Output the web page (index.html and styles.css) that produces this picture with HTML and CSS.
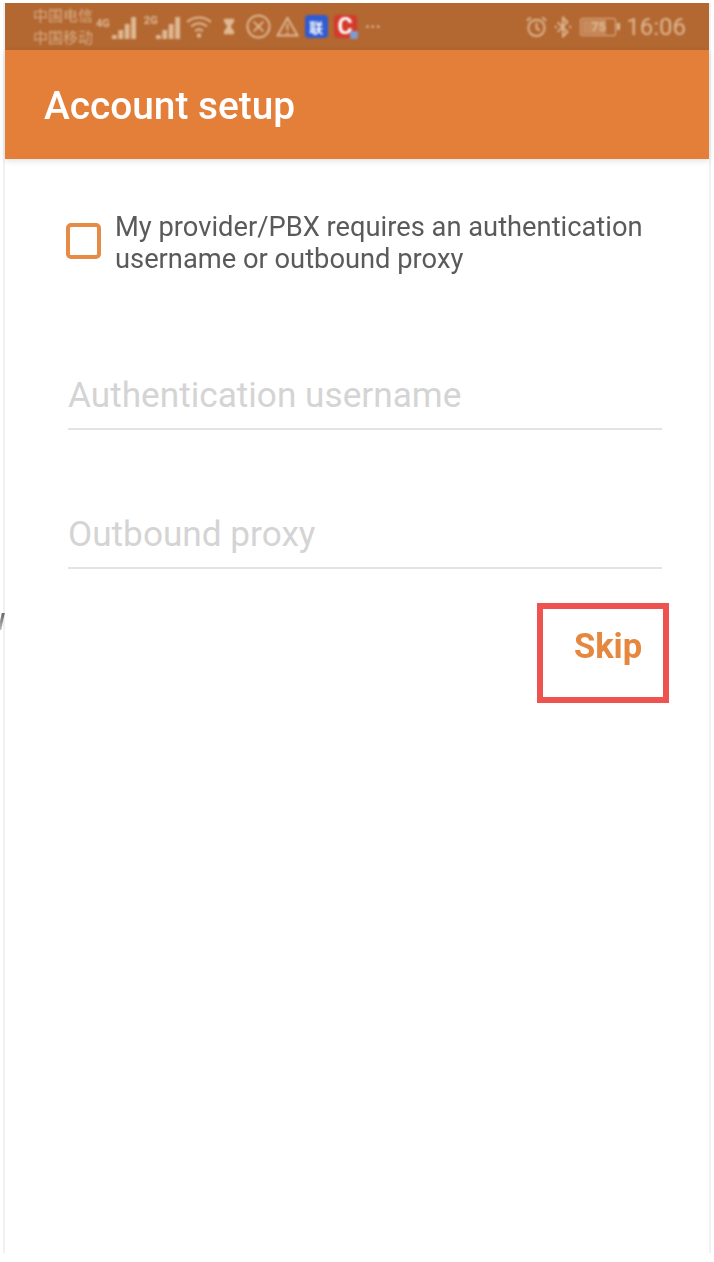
FILE: index.html
```html
<!DOCTYPE html>
<html lang="en">
<head>
<meta charset="utf-8">
<title>Account setup</title>
<link rel="stylesheet" href="styles.css">
</head>
<body>
<span class="stray"></span>
<main class="screen">
  <header class="status">
    <div class="status-left">
      <div class="carriers"><span>中国电信</span><span>中国移动</span></div>
      <span class="net net-a">4G</span>
      <svg class="ico sig sig-a" viewBox="0 0 20 22" preserveAspectRatio="none"><path d="M0 22h4v-4H0zM5.300 22h4v-9h-4zM10.600 22h4V7h-4zM16 22h4V0h-4z"/></svg>
      <span class="net net-b">2G</span>
      <svg class="ico sig sig-b" viewBox="0 0 20 22" preserveAspectRatio="none"><path d="M0 22h4v-4H0zM5.300 22h4v-9h-4zM10.600 22h4V7h-4zM16 22h4V0h-4z"/></svg>
      <svg class="ico wifi" viewBox="0 0 26 24"><path class="ln" d="M1 7c7-6 17-6 24 0M5 11.500c5-4 11-4 16 0M9 16c2.500-2 5.500-2 8 0"/><circle cx="13" cy="20.500" r="2.200"/></svg>
      <svg class="ico glass" viewBox="0 0 14 20"><path d="M1 1h12v3l-4 6 4 6v3H1v-3l4-6-4-6z"/></svg>
      <svg class="ico circ" viewBox="0 0 26 26"><circle class="ln" cx="13" cy="13" r="11.500"/><path class="ln" d="M8 8l10 10M18 8L8 18"/></svg>
      <svg class="ico warn" viewBox="0 0 24 22"><path class="ln" d="M12 2l10.500 18.500h-21z"/><path class="ln" d="M12 8v7M12 17v2"/></svg>
      <span class="app app-blue">联</span>
      <span class="app app-red">C</span>
      <span class="dots">···</span>
    </div>
    <div class="status-right">
      <svg class="ico alarm" viewBox="0 0 24 24"><circle class="ln" cx="12" cy="13.500" r="8.500"/><path class="ln" d="M12 8v6l3.500 2M2 6l4-3.500M22 6l-4-3.500"/></svg>
      <svg class="ico bt" viewBox="0 0 20 24"><path class="ln" d="M4 6.500l11 11-5 5V1.500l5 5-11 11"/><circle cx="2" cy="12" r="1.300"/><circle cx="18" cy="12" r="1.300"/></svg>
      <span class="battery"><span class="battery-fill">75</span></span>
      <span class="clock">16:06</span>
    </div>
  </header>
  <div class="appbar"><h1>Account setup</h1></div>
  <section class="content">
    <label class="check-row">
      <span class="box"></span>
      <span class="check-text">My provider/PBX requires an authentication username or outbound proxy</span>
    </label>
    <div class="field field-first">Authentication username</div>
    <div class="field field-second">Outbound proxy</div>
    <div class="actions"><div class="skip"><span class="skip-label">Skip</span></div></div>
  </section>
</main>
</body>
</html>
```
FILE: styles.css
```css
* { box-sizing: border-box; }
html, body { margin: 0; height: 100%; background: #fff; }
body { position: relative; height: 1262px; overflow: hidden; padding: 3px 3px 9px 3px; font-family: Roboto, "Noto Sans", sans-serif; }
.stray { position: absolute; left: 0; top: 613px; width: 3px; height: 17px; background: linear-gradient(#666, #bbb); transform: skewX(-12deg); }
.screen { width: 708px; height: 1250px; border-left: 2px solid #f1f1f1; border-right: 2px solid #f1f1f1; display: flex; flex-direction: column; }
.status { height: 47px; background: #b36731; color: #dfb994; display: flex; justify-content: space-between; align-items: center; padding: 0 23px 0 28px; }
.status-left, .status-right { display: flex; align-items: center; filter: blur(.8px); }
.carriers { display: flex; flex-direction: column; font: 15px/22px "Noto Sans CJK SC", sans-serif; color: #d9ae86; white-space: nowrap; margin-top: -2px; }
.ico { display: block; fill: currentColor; }
.ln { fill: none; stroke: currentColor; stroke-width: 2; }
.net { font-size: 11px; font-weight: 700; align-self: flex-start; margin-top: 11px; }
.net-a { margin-left: 3px; }
.net-b { margin-left: 8px; margin-top: 8px; }
.sig { width: 24px; height: 22px; margin-top: 3px; }
.sig-a { margin-left: 2px; }
.sig-b { margin-left: -2px; }
.wifi { width: 26px; height: 24px; margin-left: 6px; }
.glass { width: 12px; height: 17px; margin-left: 11px; }
.circ { width: 25px; height: 25px; margin-left: 11px; }
.warn { width: 23px; height: 21px; margin-left: 5px; }
.app { width: 23px; height: 23px; border-radius: 4px; margin-left: 6px; display: flex; align-items: center; justify-content: center; color: #fff; font-weight: 700; }
.app-blue { background: #2f5bd3; font: 700 14px/1 "Noto Sans CJK SC", sans-serif; }
.app-red { background: #d43a2c; font-size: 23px; position: relative; }
.app-red::after { content: ""; position: absolute; right: -1px; bottom: -1px; width: 8px; height: 8px; border-radius: 2px; background: #7f9ccf; }
.dots { margin-left: 8px; font-size: 18px; font-weight: 700; }
.alarm { width: 23px; height: 23px; }
.bt { width: 18px; height: 22px; margin-left: 6px; }
.battery { width: 36px; height: 18px; margin-left: 8px; border: 1.500px solid currentColor; border-radius: 2px; padding: 1px; position: relative; }
.battery::after { content: ""; position: absolute; right: -5px; top: 4px; width: 3px; height: 7px; background: currentColor; }
.battery-fill { display: block; height: 100%; width: 75%; background: rgba(223,185,148,.45); font-size: 13px; font-weight: 700; line-height: 13px; text-align: right; }
.clock { margin-left: 10px; font-size: 24px; line-height: 1; }
.appbar { height: 109px; background: #e47f3a; display: flex; align-items: center; padding: 4px 0 0 39px; box-shadow: 0 2px 6px rgba(0,0,0,.12); position: relative; }
.appbar h1 { margin: 0; color: #fff; font-size: 38.800px; font-weight: 500; line-height: 1; filter: blur(.6px); }
.content { padding: 52px 47px 0 61px; }
.check-row { display: flex; gap: 14px; align-items: center; }
.box { flex: none; width: 35px; height: 36px; margin-bottom: 4px; border: 4px solid #e68b45; border-radius: 5px; filter: blur(.4px); }
.check-text { font-size: 27.300px; line-height: 32px; color: #5a5a5a; filter: blur(.6px); }
.field { margin-left: 2px; height: 50px; border-bottom: 2px solid #e3e3e3; font-size: 35.200px; line-height: 30px; color: #d4d4d4; }
.field-first { margin-top: 105px; }
.field-second { margin-top: 89px; }
.actions { display: flex; justify-content: flex-end; margin: 34px -7px 0 0; }
.skip { width: 132px; height: 100px; border: 6px solid #ee5350; display: flex; align-items: center; justify-content: center; padding: 0 0 14px 10px; }
.skip-label { color: #e6873f; font-size: 34.500px; font-weight: 700; filter: blur(.6px); }
```
